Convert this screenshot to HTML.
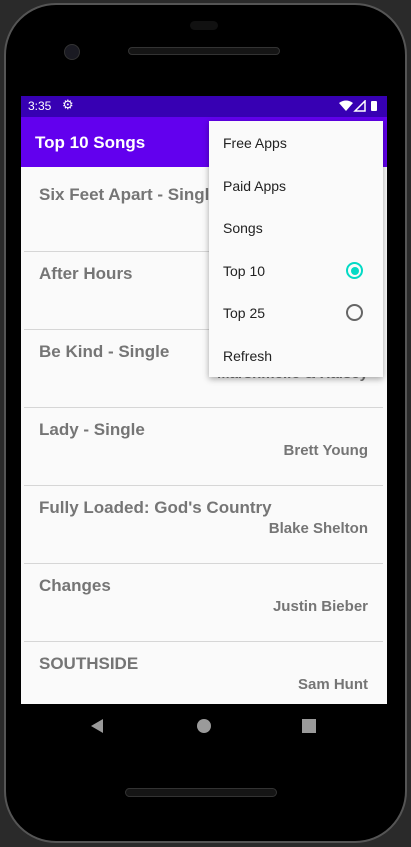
<!DOCTYPE html>
<html><head><style>
*{margin:0;padding:0;box-sizing:border-box}
body{width:411px;height:847px;background:#2a2a2a;position:relative;overflow:hidden;font-family:"Liberation Sans",sans-serif}
.phone{position:absolute;left:4px;top:3px;width:403px;height:840px;border-radius:52px;background:#000;border:2px solid #555}
.screen{position:absolute;left:21px;top:96px;width:366px;height:608px;background:#fafafa;overflow:hidden}
.status{position:absolute;left:0;top:0;width:366px;height:21px;background:#3700b3;color:#fff;font-size:12px}
.app{position:absolute;left:0;top:21px;width:366px;height:50px;background:#6200ee;color:#fff;font-size:17px;font-weight:bold;padding:16px 0 0 14px}
.row{position:absolute;left:3px;width:359px;border-bottom:1px solid #d6d6d6}
.t{position:absolute;left:15px;font-size:17px;font-weight:bold;color:#757575}
.a{position:absolute;right:15px;font-size:15px;font-weight:bold;color:#757575}
.menu{position:absolute;left:188px;top:25px;width:174px;height:256px;background:#fafafa;box-shadow:0 2px 6px rgba(0,0,0,.35);font-size:14px;color:#222}
.mi{position:absolute;left:14px}
.rad{position:absolute;left:137px;width:17px;height:17px;border-radius:50%;border:2px solid #666}
</style></head><body>
<div class="phone"></div>
<div style="position:absolute;left:64px;top:44px;width:16px;height:16px;border-radius:50%;background:#1a1a22;border:1px solid #333"></div>
<div style="position:absolute;left:128px;top:47px;width:152px;height:8px;border-radius:4px;background:#151515;border:1px solid #333"></div>
<div style="position:absolute;left:190px;top:21px;width:28px;height:9px;border-radius:5px;background:#111"></div>
<div style="position:absolute;left:125px;top:788px;width:152px;height:9px;border-radius:5px;background:#151515;border:1px solid #333"></div>
<div class="screen">
<div class="status"><span style="position:absolute;left:7px;top:3px">3:35</span><span style="position:absolute;left:41px;top:1px;font-size:13px">⚙</span>
<svg style="position:absolute;left:318px;top:4px" width="44" height="12"><path d="M0 3Q7-2 14 3L7 11Z" fill="#fff"/><path d="M26 1V11H16Z" fill="none" stroke="#fff" stroke-width="1.5"/><rect x="32" y="1" width="6" height="10" rx="1" fill="#fff"/></svg></div>
<div class="app">Top 10 Songs</div>
<div class="row" style="top:71px;height:85px"><span class="t" style="top:18px">Six Feet Apart - Single</span></div>
<div class="row" style="top:156px;height:78px"><span class="t" style="top:12px">After Hours</span></div>
<div class="row" style="top:234px;height:78px"><span class="t" style="top:12px">Be Kind - Single</span><span class="a" style="top:35px">Marshmello &amp; Halsey</span></div>
<div class="row" style="top:312px;height:78px"><span class="t" style="top:12px">Lady - Single</span><span class="a" style="top:34px">Brett Young</span></div>
<div class="row" style="top:390px;height:78px"><span class="t" style="top:12px">Fully Loaded: God's Country</span><span class="a" style="top:34px">Blake Shelton</span></div>
<div class="row" style="top:468px;height:78px"><span class="t" style="top:12px">Changes</span><span class="a" style="top:34px">Justin Bieber</span></div>
<div class="row" style="top:546px;height:78px;border:none"><span class="t" style="top:12px">SOUTHSIDE</span><span class="a" style="top:34px">Sam Hunt</span></div>
<div class="menu">
<span class="mi" style="top:14px">Free Apps</span>
<span class="mi" style="top:57px">Paid Apps</span>
<span class="mi" style="top:99px">Songs</span>
<span class="mi" style="top:142px">Top 10</span>
<div class="rad" style="top:141px;border-color:#03dac5"><div style="margin:2.5px;width:8px;height:8px;border-radius:50%;background:#03dac5"></div></div>
<span class="mi" style="top:184px">Top 25</span>
<div class="rad" style="top:183px"></div>
<span class="mi" style="top:227px">Refresh</span>
</div>
</div>
<svg style="position:absolute;left:88px;top:716px" width="240" height="20"><path d="M3 10L15 3V17Z" fill="#9a9a9a"/><circle cx="116" cy="10" r="7" fill="#9a9a9a"/><rect x="214" y="3" width="14" height="14" fill="#9a9a9a"/></svg>
</body></html>
